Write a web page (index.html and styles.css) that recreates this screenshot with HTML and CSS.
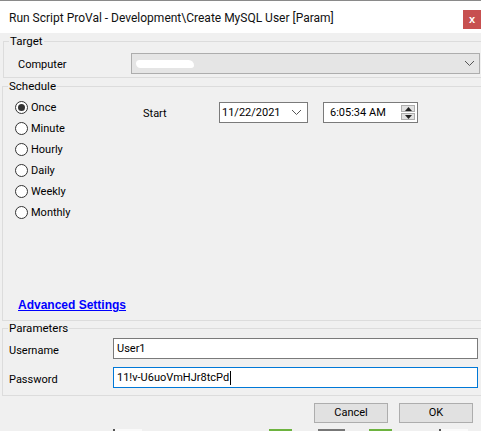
FILE: index.html
```html
<!DOCTYPE html>
<html>
<head>
<meta charset="utf-8">
<link rel="stylesheet" href="styles.css">
</head>
<body>
<div class="dialog">
  <div class="titlebar">
    <span class="title">Run Script ProVal - Development\Create MySQL User [Param]</span>
    <span class="close">x</span>
  </div>

  <fieldset class="group target">
    <legend>Target</legend>
    <div class="target-row">
      <span class="lbl comp-lbl">Computer</span>
      <div class="combo">
        <span class="redact"></span>
        <svg class="chev" width="11" height="7" viewBox="0 0 11 7"><path d="M1 1 L5.5 5.5 L10 1" fill="none" stroke="#555" stroke-width="1"/></svg>
      </div>
    </div>
  </fieldset>

  <fieldset class="group schedule">
    <legend>Schedule</legend>
    <div class="sched-top">
      <div class="radios">
        <div class="radio-row"><span class="radio checked"></span><span>Once</span></div>
        <div class="radio-row"><span class="radio"></span><span>Minute</span></div>
        <div class="radio-row"><span class="radio"></span><span>Hourly</span></div>
        <div class="radio-row"><span class="radio"></span><span>Daily</span></div>
        <div class="radio-row"><span class="radio"></span><span>Weekly</span></div>
        <div class="radio-row"><span class="radio"></span><span>Monthly</span></div>
      </div>
      <div class="start">
        <span class="start-lbl">Start</span>
        <div class="datebox">
          <span>11/22/2021</span>
          <svg class="chev" width="11" height="7" viewBox="0 0 11 7"><path d="M1 1 L5.5 5.5 L10 1" fill="none" stroke="#555" stroke-width="1"/></svg>
        </div>
        <div class="timebox">
          <span>6:05:34 AM</span>
          <div class="spin">
            <div class="spin-btn"><svg width="7" height="4" viewBox="0 0 7 4"><path d="M0 4 L3.5 0 L7 4 Z" fill="#222"/></svg></div>
            <div class="spin-btn"><svg width="7" height="4" viewBox="0 0 7 4"><path d="M0 0 L3.5 4 L7 0 Z" fill="#222"/></svg></div>
          </div>
        </div>
      </div>
    </div>
    <a class="adv" href="#">Advanced Settings</a>
  </fieldset>

  <fieldset class="group params">
    <legend>Parameters</legend>
    <div class="param-row">
      <span class="lbl plbl">Username</span>
      <div class="input">User1</div>
    </div>
    <div class="param-row second">
      <span class="lbl plbl">Password</span>
      <div class="input focused">11!v-U6uoVmHJr8tcPd<span class="caret"></span></div>
    </div>
  </fieldset>

  <div class="buttons">
    <div class="btn">Cancel</div>
    <div class="btn">OK</div>
  </div>

  <div class="strip">
    <span class="s1"></span>
    <span class="s2"></span>
    <span class="s3"></span>
    <span class="s2"></span>
    <span class="s1 s4"></span>
  </div>
</div>
</body>
</html>
```

FILE: styles.css
```css
* { box-sizing: border-box; }
html, body {
  margin: 0;
  padding: 0;
  width: 481px;
  height: 431px;
  overflow: hidden;
  background: #f0f0f0;
}
body {
  font-family: Roboto, "Noto Sans", sans-serif;
  font-size: 10.5px;
  color: #000;
}
.dialog {
  width: 481px;
  height: 431px;
}
.titlebar {
  height: 33px;
  background: #fff;
  border-top: 1px solid #8a8a8a;
  display: flex;
  align-items: flex-start;
  padding-left: 9px;
}
.title {
  margin-top: 9px;
  line-height: 16px;
  font-size: 12px;
  color: #111;
}
.close {
  margin-left: auto;
  margin-top: 9px;
  width: 18px;
  height: 19px;
  background: #c75050;
  color: #fff;
  font-family: "Liberation Sans", sans-serif;
  font-weight: bold;
  font-size: 11px;
  line-height: 18px;
  text-align: center;
}
.group {
  margin: 0;
  padding: 0;
  min-width: 0;
  border: 1px solid #dcdcdc;
  width: 500px;
}
.group legend {
  padding: 0 1px;
  margin-left: 5px;
  line-height: 16px;
  font-size: 11.5px;
}
.target {
  margin-left: 3px;
  height: 45px;
}
.target-row {
  display: flex;
  align-items: center;
  padding-top: 2px;
}
.lbl { font-size: 11px; }
.comp-lbl {
  width: 127px;
  padding-left: 14px;
  line-height: 21px;
  padding-top: 3px;
}
.combo {
  width: 349px;
  height: 21px;
  background: #e5e5e5;
  border: 1px solid #adadad;
  display: flex;
  align-items: center;
  padding-left: 4px;
  padding-right: 4px;
}
.redact {
  width: 58px;
  height: 8px;
  background: #fff;
  border-radius: 4px 6px 3px 5px;
  margin-top: 2px;
}
.chev { margin-left: auto; }
.schedule {
  margin-left: 2px;
  height: 243px;
}
.sched-top {
  display: flex;
  padding-top: 3px;
}
.radios {
  width: 140px;
  padding-left: 12px;
  font-size: 11px;
}
.radio-row {
  height: 21px;
  display: flex;
  align-items: center;
  gap: 3px;
}
.radio {
  width: 13px;
  height: 13px;
  border-radius: 50%;
  border: 1px solid #333;
  background: #fff;
  display: flex;
  align-items: center;
  justify-content: center;
}
.radio.checked::after {
  content: "";
  width: 7px;
  height: 7px;
  border-radius: 50%;
  background: #333;
}
.start {
  display: flex;
  align-items: flex-start;
  margin-top: 5px;
}
.start-lbl {
  width: 76px;
  line-height: 16px;
  padding-top: 4px;
  font-size: 11px;
}
.datebox {
  width: 89px;
  height: 21px;
  background: #fff;
  border: 1px solid #7a7a7a;
  display: flex;
  align-items: center;
  padding-left: 2px;
  padding-right: 5px;
  font-size: 11px;
}
.timebox {
  margin-left: 15px;
  width: 95px;
  height: 21px;
  background: #fff;
  border: 1px solid #7a7a7a;
  display: flex;
  align-items: center;
  padding-left: 6px;
  padding-right: 2px;
  font-size: 11px;
}
.spin {
  margin-left: auto;
  display: flex;
  flex-direction: column;
  gap: 1px;
}
.spin-btn {
  width: 14px;
  height: 7px;
  background: #e1e1e1;
  border: 1px solid #adadad;
  display: flex;
  align-items: center;
  justify-content: center;
}
.adv {
  display: block;
  width: max-content;
  margin-top: 74px;
  margin-left: 15px;
  line-height: 16px;
  font-family: "Liberation Sans", sans-serif;
  font-size: 12px;
  font-weight: bold;
  color: #0000ff;
  text-decoration: underline;
}
.params {
  margin-left: 2px;
  margin-top: -1px;
  height: 76px;
}
.param-row {
  display: flex;
  align-items: center;
  padding-top: 2px;
  padding-left: 6px;
}
.param-row.second { padding-top: 8px; }
.plbl {
  width: 104px;
  padding-top: 3px;
}
.input {
  width: 365px;
  height: 21px;
  background: #fff;
  border: 1px solid #7a7a7a;
  line-height: 19px;
  padding-left: 3px;
  display: flex;
  align-items: center;
  font-size: 11px;
}
.input.focused { border-color: #0078d7; }
.caret {
  width: 1px;
  height: 14px;
  background: #000;
  margin-left: 1px;
}
.buttons {
  display: flex;
  justify-content: flex-end;
  gap: 11px;
  padding-right: 8px;
  margin-top: 7px;
}
.btn {
  width: 74px;
  height: 20px;
  background: #e1e1e1;
  border: 1px solid #adadad;
  text-align: center;
  line-height: 18px;
  font-size: 11px;
}
.strip {
  margin-top: 6px;
  height: 3px;
  display: flex;
  padding-left: 113px;
}
.strip span { height: 3px; display: block; }
.s1 { width: 29px; background: #fafafa; border-left: 2px solid #555; }
.s2 { width: 23px; background: #6db33f; margin-left: 127px; }
.s3 { width: 27px; background: #777; margin-left: 26px; }
.strip .s2 + .s3 + .s2 { margin-left: 24px; }
.s4 { margin-left: 47px; }
```
